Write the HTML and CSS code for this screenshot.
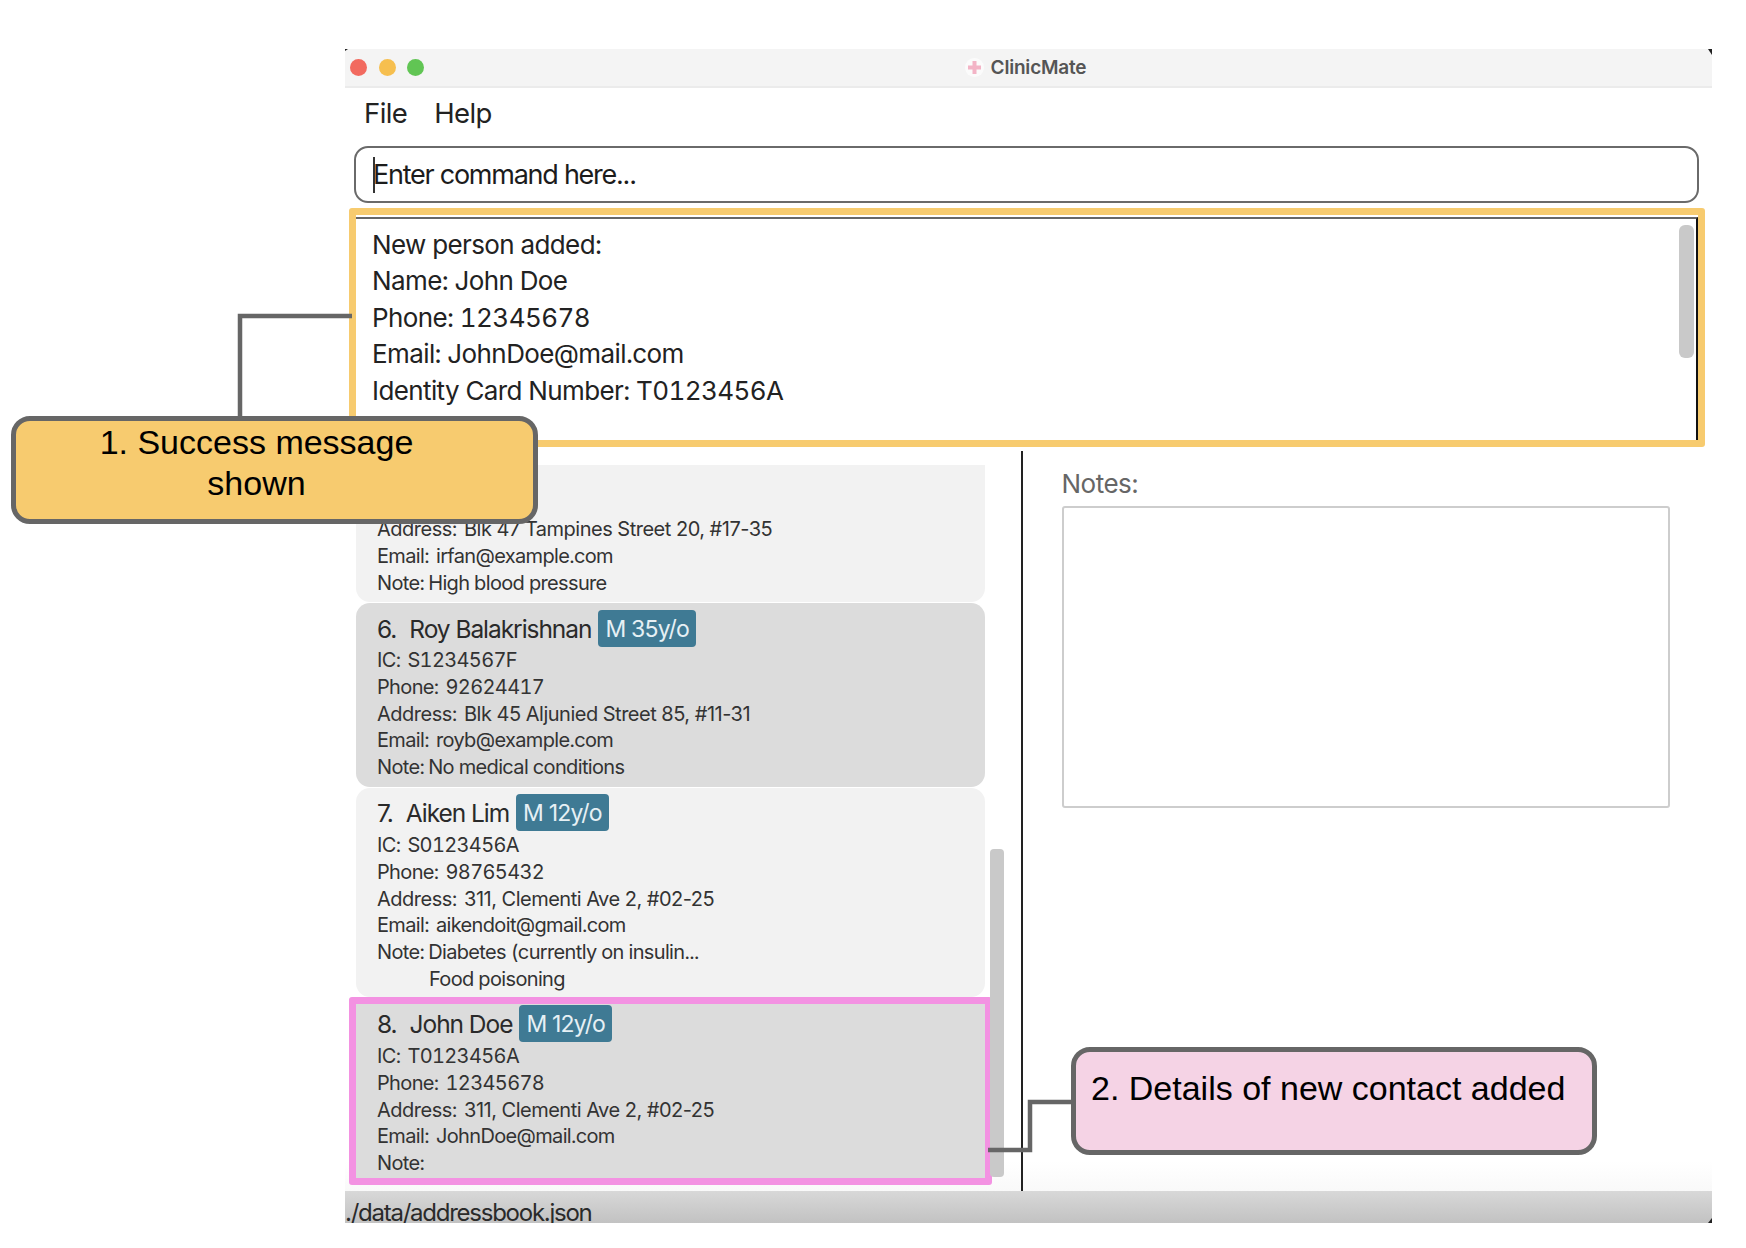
FILE: index.html
```html
<!DOCTYPE html>
<html lang="en">
<head>
    <meta charset="UTF-8">
    <meta name="viewport" content="width=device-width, initial-scale=1.0">
    <title>ClinicMate</title>
    <link rel="stylesheet" href="styles.css">
</head>
<body>
    <div class="window">
        <div class="titlebar">
            <div class="lights">
                <span class="light red"></span>
                <span class="light yellow"></span>
                <span class="light green"></span>
            </div>
            <div class="title">
                <svg class="logo" width="19" height="19" viewBox="0 0 19 19">
                    <circle cx="9.5" cy="9.5" r="9.5" fill="#fbfbfb"/>
                    <path d="M7.5 3h4v4.5H16v4h-4.5V16h-4v-4.5H3v-4h4.5z" fill="#f3b4c6"/>
                </svg>
                <span>ClinicMate</span>
            </div>
        </div>

        <div class="menubar">
            <span>File</span>
            <span>Help</span>
        </div>

        <div class="command">
            <span class="caret"></span>
            <span>Enter command here...</span>
        </div>

        <div class="result-highlight">
            <div class="result">
                <p>New person added:</p>
                <p>Name: John Doe</p>
                <p>Phone: 12345678</p>
                <p>Email: JohnDoe@mail.com</p>
                <p>Identity Card Number: T0123456A</p>
                <div class="result-scroll"></div>
            </div>
        </div>

        <div class="main">
            <div class="list">
                <div class="card light-card card-five">
                    <div class="name-row"><span class="index">5.</span><span>Irfan Ibrahim</span></div>
                    <div class="row address"><span class="label">Address:</span>Blk 47 Tampines Street 20, #17-35</div>
                    <div class="row"><span class="label">Email:</span>irfan@example.com</div>
                    <div class="row"><span class="note-label">Note:</span>High blood pressure</div>
                </div>

                <div class="card dark-card card-six">
                    <div class="name-row"><span class="index">6.</span><span>Roy Balakrishnan</span><span class="badge">M 35y/o</span></div>
                    <div class="row"><span class="label">IC:</span>S1234567F</div>
                    <div class="row"><span class="label">Phone:</span>92624417</div>
                    <div class="row address"><span class="label">Address:</span>Blk 45 Aljunied Street 85, #11-31</div>
                    <div class="row"><span class="label">Email:</span>royb@example.com</div>
                    <div class="row"><span class="note-label">Note:</span>No medical conditions</div>
                </div>

                <div class="card light-card card-seven">
                    <div class="name-row"><span class="index">7.</span><span>Aiken Lim</span><span class="badge">M 12y/o</span></div>
                    <div class="row"><span class="label">IC:</span>S0123456A</div>
                    <div class="row"><span class="label">Phone:</span>98765432</div>
                    <div class="row address"><span class="label">Address:</span>311, Clementi Ave 2, #02-25</div>
                    <div class="row"><span class="label">Email:</span>aikendoit@gmail.com</div>
                    <div class="row"><span class="note-label">Note:</span>Diabetes (currently on insulin...</div>
                    <div class="row note-more">Food poisoning</div>
                </div>

                <div class="card-highlight">
                    <div class="card dark-card card-eight">
                        <div class="name-row"><span class="index">8.</span><span>John Doe</span><span class="badge">M 12y/o</span></div>
                        <div class="row"><span class="label">IC:</span>T0123456A</div>
                        <div class="row"><span class="label">Phone:</span>12345678</div>
                        <div class="row address"><span class="label">Address:</span>311, Clementi Ave 2, #02-25</div>
                        <div class="row"><span class="label">Email:</span>JohnDoe@mail.com</div>
                        <div class="row"><span class="note-label">Note:</span></div>
                    </div>
                </div>

                <div class="list-scroll"></div>
            </div>

            <div class="divider"></div>

            <div class="notes">
                <div class="notes-label">Notes:</div>
                <div class="notes-box"></div>
            </div>
        </div>

        <div class="statusbar">./data/addressbook.json</div>
    </div>

    <svg class="connectors" width="1746" height="1248" viewBox="0 0 1746 1248">
        <polyline points="352,316 240,316 240,418" class="line"/>
        <polyline points="988,1150 1030,1150 1030,1102 1072,1102" class="line"/>
        <path d="M345 49h3l-3 2z" fill="#222"/>
        <path d="M1712 49v6l-4-6z" fill="#222"/>
        <path d="M1712 1223h-4l4-5z" fill="#222"/>
    </svg>

    <div class="callout callout-yellow">1. Success message<br>shown</div>
    <div class="callout callout-pink">2. Details of new contact added</div>
</body>
</html>
```

FILE: styles.css
```css
html, body {
    margin: 0;
    padding: 0;
}
body {
    position: relative;
    width: 1746px;
    height: 1248px;
    overflow: hidden;
    background-color: white;
    font-family: Inter, "Noto Sans", sans-serif;
    color: #222;
}
p {
    margin: 0;
}

.window {
    position: absolute;
    left: 345px;
    top: 49px;
    width: 1367px;
    height: 1174px;
    display: flex;
    flex-direction: column;
}

.titlebar {
    flex: none;
    height: 37px;
    border-bottom: 2px solid #ebebeb;
    background-color: #f4f4f4;
    display: flex;
    align-items: center;
    position: relative;
}
.lights {
    display: flex;
    gap: 11.5px;
    padding-left: 5px;
}
.light {
    width: 17px;
    height: 17px;
    border-radius: 50%;
}
.red { background-color: #f26a5f; }
.yellow { background-color: #f6bf4f; }
.green { background-color: #61c554; }
.title {
    position: absolute;
    left: 0;
    right: 6px;
    display: flex;
    justify-content: center;
    align-items: center;
    gap: 7px;
    font-size: 19px;
    font-weight: 600;
    color: #555;
    letter-spacing: -0.2px;
}

.menubar {
    flex: none;
    height: 58px;
    box-sizing: border-box;
    padding: 8px 0 0 19px;
    display: flex;
    gap: 27px;
    font-size: 27.5px;
    line-height: 34px;
    letter-spacing: -0.6px;
}

.command {
    flex: none;
    height: 57px;
    box-sizing: border-box;
    margin-left: 9px;
    width: 1345px;
    border: 2px solid #6a6a6a;
    border-radius: 14px;
    padding-left: 17px;
    display: flex;
    align-items: center;
    font-size: 27px;
    letter-spacing: -1.25px;
    color: #1c1c1c;
}
.caret {
    width: 2px;
    height: 36px;
    background-color: #333;
    margin-right: -2px;
}

.result-highlight {
    flex: none;
    margin: 5px 0 0 4px;
    width: 1356px;
    height: 239px;
    box-sizing: border-box;
    border: 7px solid #f7cb6f;
    border-radius: 3px;
    background-color: white;
}
.result {
    position: relative;
    box-sizing: border-box;
    padding: 7.5px 0 0 16px;
    border-top: 2px solid #666;
    border-right: 2px solid #111;
    margin-top: 2px;
    width: 1342px;
    height: 223px;
    font-size: 26px;
    line-height: 36.6px;
    letter-spacing: -0.6px;
    font-variant-numeric: tabular-nums;
    color: #222;
}
.result-scroll {
    position: absolute;
    top: 6px;
    right: 2px;
    width: 15px;
    height: 133px;
    border-radius: 6px;
    background-color: #c9c9c9;
}

.main {
    flex: 1;
    display: flex;
    min-height: 0;
    background: linear-gradient(to bottom, white 96%, #f9f9f9);
}
.list {
    position: relative;
    width: 676px;
    flex: none;
    box-sizing: border-box;
    padding: 18px 0 0 11px;
}
.divider {
    flex: none;
    width: 1.5px;
    margin-top: 4px;
    background-color: #222;
}

.card {
    width: 629px;
    box-sizing: border-box;
    padding-left: 21px;
    border-radius: 14px;
    color: #333;
    font-size: 20px;
}
.light-card { background-color: #f2f2f2; }
.dark-card { background-color: #dcdcdc; }
.card-five {
    height: 137px;
    padding-top: 14px;
    margin-bottom: 1px;
    border-radius: 0 0 14px 14px;
}
.card-five .index {
    margin-right: 7px;
}
.card-six {
    height: 184px;
    padding-top: 7px;
    margin-bottom: 1px;
}
.card-seven {
    height: 209px;
    padding-top: 6px;
}
.card-seven .name-row,
.card-eight .name-row {
    margin-bottom: 1px;
}
.card-eight {
    height: 174px;
    padding-top: 1px;
    border-radius: 0;
}
.card-highlight {
    position: relative;
    width: 643px;
    box-sizing: border-box;
    margin-left: -7px;
    border: 7px solid #f392e2;
    border-radius: 3px;
}

.name-row {
    display: flex;
    align-items: center;
    height: 37px;
    font-size: 24.5px;
    letter-spacing: -1.05px;
    color: #2a2a2a;
}
.index {
    margin-right: 13px;
}
.badge {
    margin-left: 7px;
    height: 37px;
    padding: 0 7px;
    display: flex;
    align-items: center;
    border-radius: 4px;
    background-color: #3f7a94;
    color: #e6f0f4;
    font-size: 23px;
    letter-spacing: -0.8px;
}
.row {
    height: 26.8px;
    line-height: 26.8px;
    letter-spacing: -0.65px;
    font-variant-numeric: tabular-nums;
    white-space: nowrap;
}
.row.address {
    letter-spacing: -0.5px;
    font-variant-numeric: normal;
}
.label {
    margin-right: 7px;
}
.note-label {
    margin-right: 4px;
}
.note-more {
    padding-left: 52px;
}

.list-scroll {
    position: absolute;
    left: 645px;
    top: 402px;
    width: 14px;
    height: 328px;
    border-radius: 4px;
    background-color: #c9c9c9;
}

.notes {
    flex: 1;
    padding-left: 39px;
}
.notes-label {
    margin-top: 19px;
    height: 40px;
    line-height: 36px;
    font-size: 26px;
    letter-spacing: -0.5px;
    color: #666;
}
.notes-box {
    width: 608px;
    height: 302px;
    box-sizing: border-box;
    border: 2px solid #cdcdcd;
    border-radius: 3px;
}

.statusbar {
    flex: none;
    height: 32px;
    overflow: hidden;
    background: linear-gradient(to bottom, #d8d8d8, #c2c2c2);
    font-size: 24px;
    line-height: 44px;
    letter-spacing: -1.25px;
    color: #2a2a2a;
    white-space: nowrap;
}

.connectors {
    position: absolute;
    left: 0;
    top: 0;
}
.line {
    fill: none;
    stroke: #666;
    stroke-width: 4.5;
}

.callout {
    position: absolute;
    box-sizing: border-box;
    border: 5px solid #666;
    border-radius: 19px;
    font-family: "Liberation Sans", Arial, sans-serif;
    font-size: 34px;
    line-height: 41px;
    color: black;
}
.callout-yellow {
    left: 11px;
    top: 416px;
    width: 527px;
    height: 108px;
    padding: 1px 36px 0 0;
    text-align: center;
    background-color: #f7cb6f;
}
.callout-pink {
    left: 1071px;
    top: 1047px;
    width: 526px;
    height: 108px;
    padding: 16px 0 0 15px;
    background-color: #f5d3e5;
}
```
